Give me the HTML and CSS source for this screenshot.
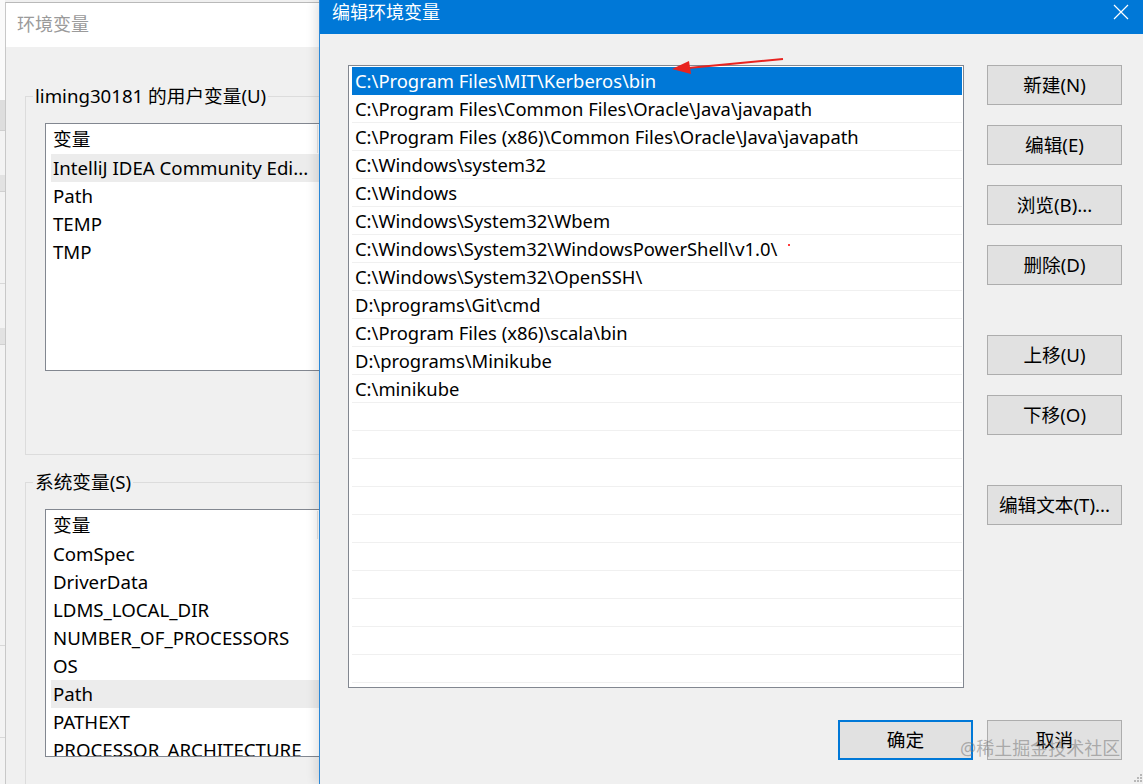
FILE: index.html
```html
<!DOCTYPE html>
<html lang="zh-CN">
<head>
    <meta charset="UTF-8">
    <title>编辑环境变量</title>
    <link rel="stylesheet" href="styles.css">
</head>
<body>

<div class="screen">
    <!-- window behind both dialogs -->
    <div class="behind">
        <div class="behind-top"></div>
        <div class="behind-band"></div>
        <div class="behind-row"></div>
        <div class="behind-band"></div>
        <div class="behind-row tall"></div>
        <div class="behind-row"></div>
    </div>

    <section class="env-dialog">
        <div class="env-title">环境变量</div>
        <div class="env-body">
            <fieldset class="group">
                <legend>liming30181 的用户变量(U)</legend>
                <div class="listview">
                    <div class="lv-header"><span class="lv-col">变量</span></div>
                    <div class="lv-row hot">IntelliJ IDEA Community Edi...</div>
                    <div class="lv-row">Path</div>
                    <div class="lv-row">TEMP</div>
                    <div class="lv-row">TMP</div>
                </div>
            </fieldset>
            <fieldset class="group last">
                <legend>系统变量(S)</legend>
                <div class="listview">
                    <div class="lv-header"><span class="lv-col">变量</span></div>
                    <div class="lv-row">ComSpec</div>
                    <div class="lv-row">DriverData</div>
                    <div class="lv-row">LDMS_LOCAL_DIR</div>
                    <div class="lv-row">NUMBER_OF_PROCESSORS</div>
                    <div class="lv-row">OS</div>
                    <div class="lv-row hot">Path</div>
                    <div class="lv-row">PATHEXT</div>
                    <div class="lv-row">PROCESSOR_ARCHITECTURE</div>
                </div>
            </fieldset>
        </div>
    </section>

    <section class="edit-dialog">
        <div class="edit-title">
            <span>编辑环境变量</span>
            <svg class="close" width="16" height="16" viewBox="0 0 16 16">
                <path d="M1 1 L15 15 M15 1 L1 15" stroke="#ffffff" stroke-width="1.2" fill="none"/>
            </svg>
        </div>
        <div class="edit-body">
            <div class="path-list">
                <div class="path-row selected">C:\Program Files\MIT\Kerberos\bin</div>
                <div class="path-row">C:\Program Files\Common Files\Oracle\Java\javapath</div>
                <div class="path-row">C:\Program Files (x86)\Common Files\Oracle\Java\javapath</div>
                <div class="path-row">C:\Windows\system32</div>
                <div class="path-row">C:\Windows</div>
                <div class="path-row">C:\Windows\System32\Wbem</div>
                <div class="path-row">C:\Windows\System32\WindowsPowerShell\v1.0\<span class="dot"></span></div>
                <div class="path-row">C:\Windows\System32\OpenSSH\</div>
                <div class="path-row">D:\programs\Git\cmd</div>
                <div class="path-row">C:\Program Files (x86)\scala\bin</div>
                <div class="path-row">D:\programs\Minikube</div>
                <div class="path-row">C:\minikube</div>
                <div class="path-row"></div>
                <div class="path-row"></div>
                <div class="path-row"></div>
                <div class="path-row"></div>
                <div class="path-row"></div>
                <div class="path-row"></div>
                <div class="path-row"></div>
                <div class="path-row"></div>
                <div class="path-row"></div>
                <div class="path-row"></div>
            </div>
            <div class="side-buttons">
                <button class="btn">新建(N)</button>
                <button class="btn">编辑(E)</button>
                <button class="btn">浏览(B)...</button>
                <button class="btn">删除(D)</button>
                <button class="btn spaced">上移(U)</button>
                <button class="btn">下移(O)</button>
                <button class="btn spaced">编辑文本(T)...</button>
            </div>
            <div class="footer">
                <button class="btn default">确定</button>
                <button class="btn">取消</button>
            </div>
        </div>
        <svg class="grip" width="10" height="10" viewBox="0 0 10 10">
            <rect x="7" y="1" width="2" height="2" fill="#b8b8b8"/>
            <rect x="4" y="4" width="2" height="2" fill="#b8b8b8"/>
            <rect x="7" y="4" width="2" height="2" fill="#b8b8b8"/>
            <rect x="1" y="7" width="2" height="2" fill="#b8b8b8"/>
            <rect x="4" y="7" width="2" height="2" fill="#b8b8b8"/>
            <rect x="7" y="7" width="2" height="2" fill="#b8b8b8"/>
        </svg>
    </section>

    <!-- annotation drawn on the screenshot -->
    <svg class="arrow" width="130" height="30" viewBox="0 0 130 30">
        <line x1="113" y1="7" x2="18" y2="16" stroke="#e8231f" stroke-width="2"/>
        <polygon points="2,17 19,9 21,22" fill="#e8231f"/>
    </svg>
    <div class="watermark">@稀土掘金技术社区</div>
</div>

</body>
</html>
```

FILE: styles.css
```css
body {
    margin: 0;
    padding: 0;
    background-color: #f0f0f0;
    font-family: "Noto Sans", "Noto Sans CJK SC", sans-serif;
    font-size: 18.67px;
    color: #000;
}
.screen {
    position: relative;
    display: flex;
    width: 1143px;
    height: 784px;
    overflow: hidden;
    background-color: #f0f0f0;
}

/* strip of the window in the back */
.behind {
    flex: 0 0 5px;
    display: flex;
    flex-direction: column;
    background-color: #f3f3f3;
}
.behind-top {
    height: 130px;
    background: linear-gradient(#fafafa 0, #fafafa 100px, #dedede 100px);
    border-bottom: 1px solid #cfcfcf;
}
.behind-band {
    height: 16px;
    margin-top: 44px;
    background-color: #e2e2e2;
    border-bottom: 1px solid #d0d0d0;
}
.behind-row {
    height: 91px;
    border-bottom: 1px solid #d8d8d8;
}
.behind-row.tall {
    height: 300px;
}

/* back dialog: 环境变量 */
.env-dialog {
    flex: 0 0 313px;
    margin-top: 2px;
    border-top: 1px solid #b9b9b9;
    border-left: 1px solid #c8c8c8;
    overflow: hidden;
    background-color: #f0f0f0;
}
.env-title {
    height: 44px;
    line-height: 42px;
    padding-left: 11px;
    background-color: #fff;
    color: #9a9a9a;
    font-size: 18px;
}
.env-body {
    width: 560px;
    padding-left: 19px;
}
.group {
    margin: 37px 0 0 0;
    padding: 0 0 83px 0;
    min-width: 0;
    border: 1px solid #dcdcdc;
}
.group.last {
    margin-top: 15px;
    padding-bottom: 200px;
}
.group legend {
    margin-left: 7px;
    padding: 0 2px;
    line-height: 24px;
}
.listview {
    margin: 15px 0 0 19px;
    width: 420px;
    height: 246px;
    border: 1px solid #828790;
    background-color: #fff;
    overflow: hidden;
}
.lv-header {
    height: 30px;
    line-height: 30px;
}
.lv-col {
    display: inline-block;
    width: 264px;
    padding-left: 7px;
    border-right: 1px solid #e5e5e5;
    line-height: 28px;
}
.lv-row {
    height: 28px;
    line-height: 28px;
    margin-left: 5px;
    padding-left: 2px;
    white-space: nowrap;
}
.lv-row.hot {
    background-color: #ececec;
}

/* front dialog: 编辑环境变量 */
.edit-dialog {
    position: relative;
    flex: 1;
    border-left: 1px solid #2a87d7;
    background-color: #f0f0f0;
    box-shadow: -3px 0 10px rgba(0, 0, 0, 0.12);
}
.edit-title {
    display: flex;
    justify-content: space-between;
    align-items: flex-start;
    height: 34px;
    padding: 0 14px 0 12px;
    background-color: #0078d7;
    color: #fff;
    line-height: 24px;
    font-size: 18px;
}
.close {
    margin-top: 4px;
}
.edit-body {
    display: grid;
    grid-template-columns: 616px 135px;
    column-gap: 23px;
    padding: 31px 21px 0 28px;
}
.path-list {
    height: 623px;
    padding: 1px 1px 0 3px;
    border: 1px solid #828790;
    background-color: #fff;
    overflow: hidden;
    box-sizing: border-box;
}
.path-row {
    height: 28px;
    line-height: 28px;
    padding-left: 3px;
    border-bottom: 1px solid #f0f0f0;
    box-sizing: border-box;
    font-size: 18.4px;
    white-space: nowrap;
}
.path-row.selected {
    background-color: #0078d7;
    border-bottom-color: #0078d7;
    color: #fff;
}
.dot {
    display: inline-block;
    width: 2px;
    height: 2px;
    margin-left: 11px;
    vertical-align: 10px;
    background-color: #ff3b3b;
}
.side-buttons {
    display: flex;
    flex-direction: column;
}
.btn {
    width: 135px;
    height: 40px;
    margin-bottom: 20px;
    padding: 0 0 3px 0;
    border: 1px solid #adadad;
    background-color: #e1e1e1;
    color: #000;
    font-family: "Noto Sans", "Noto Sans CJK SC", sans-serif;
    font-size: 18.67px;
}
.btn.spaced {
    margin-top: 30px;
}
.btn.default {
    border: 2px solid #0078d7;
}
.footer {
    grid-column: 1 / 3;
    display: flex;
    justify-content: flex-end;
    gap: 14px;
    margin-top: 32px;
}
.footer .btn {
    margin-bottom: 0;
}
.grip {
    position: absolute;
    right: 0;
    bottom: 1px;
}

/* overlays on the screenshot */
.arrow {
    position: absolute;
    left: 670px;
    top: 52px;
}
.watermark {
    position: absolute;
    left: 960px;
    top: 736px;
    color: rgba(120, 120, 120, 0.55);
    font-size: 18px;
    line-height: 24px;
}
```
